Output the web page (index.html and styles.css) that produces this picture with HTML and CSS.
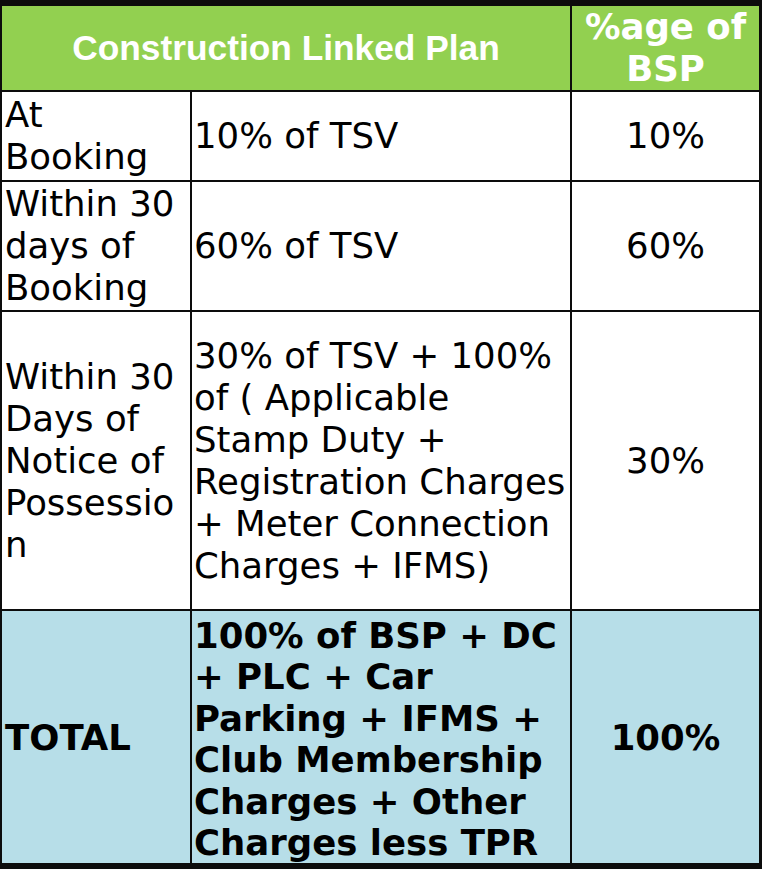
FILE: index.html
```html
<!DOCTYPE html>
<html>
<head>
<meta charset="utf-8">
<link rel="stylesheet" href="styles.css">
</head>
<body>
<div class="plan">
  <div class="cell head head-main">Construction Linked Plan</div>
  <div class="cell head head-pct">%age of<br>BSP</div>

  <div class="cell stage">At<br>Booking</div>
  <div class="cell desc">10% of TSV</div>
  <div class="cell pct">10%</div>

  <div class="cell stage">Within 30<br>days of<br>Booking</div>
  <div class="cell desc">60% of TSV</div>
  <div class="cell pct">60%</div>

  <div class="cell stage">Within 30<br>Days of<br>Notice of<br>Possessio<br>n</div>
  <div class="cell desc">30% of TSV + 100%<br>of ( Applicable<br>Stamp Duty +<br>Registration Charges<br>+ Meter Connection<br>Charges + IFMS)</div>
  <div class="cell pct">30%</div>

  <div class="cell stage total">TOTAL</div>
  <div class="cell desc total total-desc">100% of BSP + DC<br>+ PLC + Car<br>Parking + IFMS +<br>Club Membership<br>Charges + Other<br>Charges less TPR</div>
  <div class="cell pct total">100%</div>
</div>
</body>
</html>
```

FILE: styles.css
```css
html, body {
  margin: 0;
  padding: 0;
  background: #ffffff;
}

.plan {
  display: grid;
  grid-template-columns: 188px 378px 187px;
  grid-template-rows: 84px 88px 128px 297px 252px;
  gap: 2px;
  padding: 6px 3px 6px 2px;
  width: 762px;
  box-sizing: border-box;
  background: #0c0c0c;
  font-family: "DejaVu Sans", sans-serif;
  font-size: 35.5px;
  line-height: 42px;
  color: #000;
}

.cell {
  display: flex;
  align-items: center;
  background: #ffffff;
  white-space: nowrap;
}

.head {
  background: #92d050;
  color: #ffffff;
  font-weight: bold;
  justify-content: center;
  text-align: center;
}

.head-main {
  grid-column: 1 / span 2;
  font-family: "Liberation Sans", Arial, sans-serif;
  font-size: 35.3px;
}

.stage {
  padding-left: 3px;
}

.desc {
  padding-left: 2px;
}

.pct {
  justify-content: center;
  text-align: center;
}

.total {
  background: #b7dee8;
  font-weight: bold;
  padding-top: 2px;
}

.total-desc {
  padding-top: 4px;
  line-height: 41.5px;
}

.stage.total {
  padding-left: 3px;
}
```
